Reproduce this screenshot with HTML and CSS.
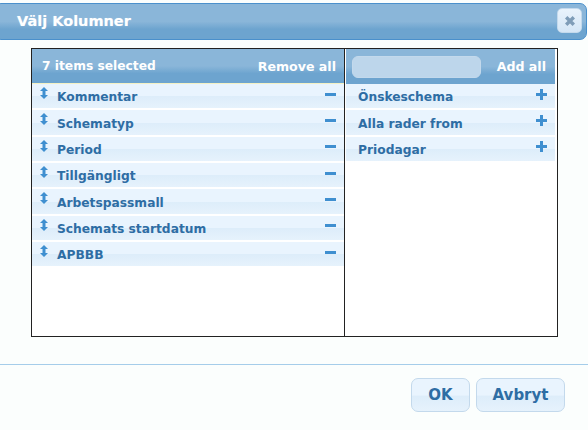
FILE: index.html
```html
<!DOCTYPE html>
<html lang="sv">
<head>
<meta charset="utf-8">
<title>Välj Kolumner</title>
<link rel="stylesheet" href="styles.css">
</head>
<body>
<div class="dialog">
  <header class="titlebar">
    <span class="title">Välj Kolumner</span>
    <button class="close" aria-label="Stäng"><svg width="12" height="12" viewBox="0 0 12 12"><path d="M2.200 2.200l7.600 7.600M9.800 2.200l-7.600 7.600" stroke="#7f9db8" stroke-width="3.400" fill="none"/></svg></button>
  </header>
  <main class="content">
    <div class="picker">
      <section class="pane pane-left">
        <div class="pane-head"><span>7 items selected</span><span class="action">Remove all</span></div>
        <ul class="list">
          <li class="row"><svg class="grip" width="8" height="12" viewBox="0 0 8 12"><path d="M4 0L8 4H5.500V8H8L4 12L0 8H2.500V4H0Z" fill="#3f8fd0"/></svg><span class="label">Kommentar</span><span class="minus"></span></li>
          <li class="row"><svg class="grip" width="8" height="12" viewBox="0 0 8 12"><path d="M4 0L8 4H5.500V8H8L4 12L0 8H2.500V4H0Z" fill="#3f8fd0"/></svg><span class="label">Schematyp</span><span class="minus"></span></li>
          <li class="row"><svg class="grip" width="8" height="12" viewBox="0 0 8 12"><path d="M4 0L8 4H5.500V8H8L4 12L0 8H2.500V4H0Z" fill="#3f8fd0"/></svg><span class="label">Period</span><span class="minus"></span></li>
          <li class="row"><svg class="grip" width="8" height="12" viewBox="0 0 8 12"><path d="M4 0L8 4H5.500V8H8L4 12L0 8H2.500V4H0Z" fill="#3f8fd0"/></svg><span class="label">Tillgängligt</span><span class="minus"></span></li>
          <li class="row"><svg class="grip" width="8" height="12" viewBox="0 0 8 12"><path d="M4 0L8 4H5.500V8H8L4 12L0 8H2.500V4H0Z" fill="#3f8fd0"/></svg><span class="label">Arbetspassmall</span><span class="minus"></span></li>
          <li class="row"><svg class="grip" width="8" height="12" viewBox="0 0 8 12"><path d="M4 0L8 4H5.500V8H8L4 12L0 8H2.500V4H0Z" fill="#3f8fd0"/></svg><span class="label">Schemats startdatum</span><span class="minus"></span></li>
          <li class="row"><svg class="grip" width="8" height="12" viewBox="0 0 8 12"><path d="M4 0L8 4H5.500V8H8L4 12L0 8H2.500V4H0Z" fill="#3f8fd0"/></svg><span class="label">APBBB</span><span class="minus"></span></li>
        </ul>
      </section>
      <section class="pane pane-right">
        <div class="pane-head"><input class="search" type="text" aria-label="Sök"><span class="action">Add all</span></div>
        <ul class="list">
          <li class="row row-avail"><span class="label">Önskeschema</span><span class="plus"></span></li>
          <li class="row row-avail"><span class="label">Alla rader from</span><span class="plus"></span></li>
          <li class="row row-avail"><span class="label">Priodagar</span><span class="plus"></span></li>
        </ul>
      </section>
    </div>
  </main>
  <footer class="footer">
    <button class="btn btn-ok">OK</button>
    <button class="btn btn-cancel">Avbryt</button>
  </footer>
</div>
</body>
</html>
```
FILE: styles.css
```css
* { box-sizing: border-box; }
html, body { margin: 0; height: 100%; }
body {
  background: #fbfefd;
  font-family: "DejaVu Sans", sans-serif;
  font-weight: bold;
  overflow: hidden;
}
.dialog { width: 588px; height: 430px; padding-top: 3px; display: flex; flex-direction: column; }
.titlebar {
  flex: none;
  height: 37px;
  margin: 0 1px 0 -6px;
  padding: 0 4px 2px 22px;
  display: flex;
  align-items: center;
  justify-content: space-between;
  border: 1px solid #4a90cc;
  border-radius: 7px;
  background: linear-gradient(to bottom, #8ab6d9 0, #8ab6d9 50%, #6da4cf 72%, #6da4cf 100%);
  color: #fff;
}
.title { font-size: 14.500px; text-shadow: 0 0 1px rgba(255,255,255,.4); }
.close {
  width: 25px; height: 25px; padding: 0;
  display: flex; align-items: center; justify-content: center;
  border: 1px solid #c3d9ec;
  border-radius: 5px;
  background: linear-gradient(to bottom, #e9f3fc, #d4e6f6);
}
.content { padding: 8px 0 0 31px; height: 324px; flex: none; }
.picker {
  width: 527px; height: 289px;
  display: flex;
  border: 1px solid #222;
  background: #fff;
}
.pane { height: 100%; }
.pane-left { width: 312px; }
.pane-right { flex: 1; border-left: 1px solid #222; padding-left: 1px; padding-right: 2px; }
.pane-head {
  height: 35px;
  display: flex;
  align-items: center;
  justify-content: space-between;
  padding: 0 8px 0 10px;
  color: #fff;
  font-size: 12.250px;
  background: linear-gradient(to bottom, #8ab6d9 0, #8ab6d9 50%, #6da4cf 72%, #6da4cf 100%);
}
.pane-head .action { font-size: 12.600px; }
.pane-left .pane-head { border-bottom: 1px solid #f4f1c4; }
.pane-right .pane-head { padding: 0 9px 0 6px; }
.search {
  width: 129px; height: 22px;
  border: 1px solid #c3d9ec;
  border-radius: 6px;
  background: #bdd6eb;
}
.list { margin: 0; padding: 0; list-style: none; }
.row {
  height: 26.350px;
  display: flex;
  align-items: center;
  padding: 0 8px 4px 8px;
  border-bottom: 2px solid #fff;
  background: linear-gradient(to bottom, #e9f4fe 0, #e9f4fe 50%, #ddedfa 52%, #e6f2fc 100%);
  color: #2e6da4;
  font-size: 12.250px;
}
.row-avail { padding-left: 12px; padding-right: 8px; }
.grip { align-self: flex-start; margin-top: 3px; flex: none; }
.label { margin-left: 9px; flex: 1; line-height: 24px; padding-top: 6px; }
.row-avail .label { margin-left: 0; }
.minus, .plus { position: relative; width: 11px; height: 11px; flex: none; margin-top: 0; }
.minus::before, .plus::before {
  content: ""; position: absolute; left: 0; right: 0; top: 4px; height: 3px; background: #3f8fd0;
}
.plus::after {
  content: ""; position: absolute; top: 0; bottom: 0; left: 4px; width: 3px; background: #3f8fd0;
}
.footer {
  flex: none;
  height: 66px;
  border-top: 1px solid #a5cdea;
  display: flex;
  justify-content: flex-end;
  align-items: flex-start;
  gap: 6px;
  padding: 13px 23px 0 0;
}
.btn {
  height: 34px;
  border: 1px solid #c3d9ec;
  border-radius: 7px;
  background: linear-gradient(to bottom, #e9f4fe 0, #e9f4fe 50%, #ddedfa 54%, #e6f2fc 100%);
  color: #2e6da4;
  font-family: inherit;
  font-weight: bold;
  font-size: 15px;
  padding: 0;
}
.btn-ok { width: 59px; }
.btn-cancel { width: 89px; }
```
